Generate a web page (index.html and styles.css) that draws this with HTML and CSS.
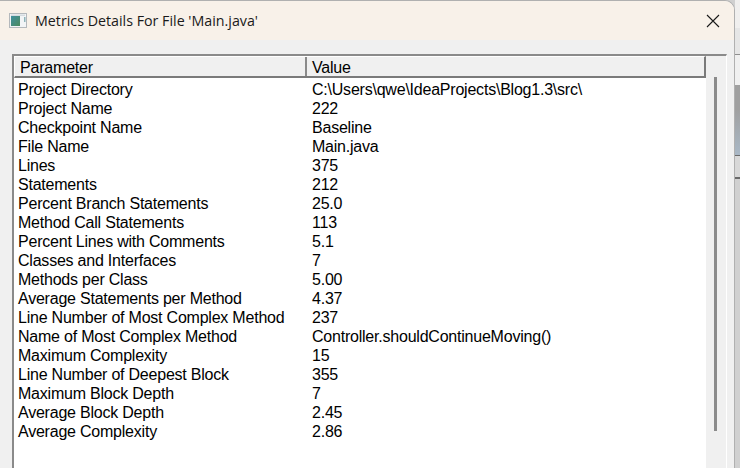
FILE: index.html
```html
<!DOCTYPE html>
<html lang="en">
<head>
    <meta charset="UTF-8">
    <title>Metrics Details For File 'Main.java'</title>
    <link rel="stylesheet" href="styles.css">
</head>
<body>
    <div class="window">
        <div class="title-bar">
            <svg class="app-icon" width="18" height="15" viewBox="0 0 18 15">
                <defs>
                    <linearGradient id="pane" x1="0" y1="0" x2="1" y2="1">
                        <stop offset="0" stop-color="#3f8f9f"/>
                        <stop offset="1" stop-color="#4c8a5e"/>
                    </linearGradient>
                </defs>
                <rect x="0.5" y="0.5" width="17" height="14" fill="#f2f4f6" stroke="#b4b8bc"/>
                <rect x="2" y="1.5" width="14" height="1.5" fill="#d5dbe0"/>
                <rect x="2" y="3" width="9" height="10" fill="url(#pane)"/>
                <rect x="15" y="4" width="1.5" height="5" fill="#8fb4ba"/>
            </svg>
            <span class="title-text">Metrics Details For File 'Main.java'</span>
            <svg class="close-icon" width="14" height="14" viewBox="0 0 14 14">
                <path d="M1 1 L13 13 M13 1 L1 13" stroke="#1a1a1a" stroke-width="1.1" fill="none"/>
            </svg>
        </div>
        <div class="content">
            <div class="list">
                <div class="list-main">
                    <div class="list-header">
                        <div class="header-cell col-param">Parameter</div>
                        <div class="header-cell col-value">Value</div>
                    </div>
                    <div class="rows">
                        <div class="row"><span class="col-param">Project Directory</span><span>C:\Users\qwe\IdeaProjects\Blog1.3\src\</span></div>
                        <div class="row"><span class="col-param">Project Name</span><span>222</span></div>
                        <div class="row"><span class="col-param">Checkpoint Name</span><span>Baseline</span></div>
                        <div class="row"><span class="col-param">File Name</span><span>Main.java</span></div>
                        <div class="row"><span class="col-param">Lines</span><span>375</span></div>
                        <div class="row"><span class="col-param">Statements</span><span>212</span></div>
                        <div class="row"><span class="col-param">Percent Branch Statements</span><span>25.0</span></div>
                        <div class="row"><span class="col-param">Method Call Statements</span><span>113</span></div>
                        <div class="row"><span class="col-param">Percent Lines with Comments</span><span>5.1</span></div>
                        <div class="row"><span class="col-param">Classes and Interfaces</span><span>7</span></div>
                        <div class="row"><span class="col-param">Methods per Class</span><span>5.00</span></div>
                        <div class="row"><span class="col-param">Average Statements per Method</span><span>4.37</span></div>
                        <div class="row"><span class="col-param">Line Number of Most Complex Method</span><span>237</span></div>
                        <div class="row"><span class="col-param">Name of Most Complex Method</span><span>Controller.shouldContinueMoving()</span></div>
                        <div class="row"><span class="col-param">Maximum Complexity</span><span>15</span></div>
                        <div class="row"><span class="col-param">Line Number of Deepest Block</span><span>355</span></div>
                        <div class="row"><span class="col-param">Maximum Block Depth</span><span>7</span></div>
                        <div class="row"><span class="col-param">Average Block Depth</span><span>2.45</span></div>
                        <div class="row"><span class="col-param">Average Complexity</span><span>2.86</span></div>
                    </div>
                </div>
                <div class="scrollbar">
                    <div class="thumb"></div>
                </div>
            </div>
        </div>
    </div>
    <!-- strip of the windows behind the dialog -->
    <div class="behind">
        <div class="behind-top"></div>
        <div class="behind-bar"></div>
        <div class="behind-rule"></div>
        <div class="behind-panel"></div>
        <div class="behind-image"></div>
        <div class="behind-rule dark"></div>
        <div class="behind-tab"></div>
        <div class="behind-rule dark thick"></div>
        <div class="behind-rest"></div>
    </div>
</body>
</html>
```

FILE: styles.css
```css
html, body {
    height: 100%;
}

body {
    margin: 0;
    overflow: hidden;
    display: flex;
    background: #d0d0d0;
    font-family: "Liberation Sans", Arial, sans-serif;
    color: #000;
}

.window {
    width: 735px;
    height: 468px;
    flex: none;
    box-sizing: border-box;
    display: flex;
    flex-direction: column;
    background: #f0f0f0;
    border-top: 1px solid #b0b0b0;
    border-right: 1px solid #b0b0b0;
    border-top-right-radius: 10px;
    overflow: hidden;
}

.title-bar {
    height: 39px;
    flex: none;
    display: flex;
    align-items: center;
    padding: 0 14px 0 9px;
    background: #f8f1e9;
}

.app-icon {
    flex: none;
    margin-right: 8px;
}

.title-text {
    flex: 1;
    font-family: "Open Sans", "Noto Sans", sans-serif;
    font-size: 14.25px;
    color: #1a1a1a;
}

.close-icon {
    flex: none;
}

.content {
    flex: 1;
    min-height: 0;
    padding: 14px 7px 0 12px;
}

.list {
    height: 100%;
    box-sizing: border-box;
    display: flex;
    background: #fff;
    border-top: 2px solid #8a8a8a;
    border-left: 2px solid #8a8a8a;
    border-right: 1px solid #fff;
}

.list-main {
    flex: 1;
    min-width: 0;
    display: flex;
    flex-direction: column;
}

.list-header {
    height: 22px;
    display: flex;
    flex: none;
    box-sizing: border-box;
    background: #f0f0f0;
    border-top: 1px solid #fff;
    border-left: 1px solid #fff;
    border-bottom: 2px solid #7a7a7a;
    border-right: 2px solid #7a7a7a;
    font-size: 16px;
    letter-spacing: -0.2px;
    line-height: 19px;
}

.header-cell {
    padding: 1px 0 0 5px;
    box-sizing: border-box;
}

.header-cell.col-param {
    width: 292px;
    border-right: 2px solid #8a8a8a;
}

.rows {
    padding: 2px 0 0 4px;
    font-size: 16px;
    letter-spacing: -0.22px;
    line-height: 19px;
}

.row {
    display: flex;
    height: 19px;
    white-space: nowrap;
}

.row .col-param {
    width: 294px;
    flex: none;
}

.scrollbar {
    width: 20px;
    flex: none;
    background: #f0f0f0;
}

.thumb {
    width: 3px;
    height: 354px;
    margin: 21px 0 0 8px;
    background: #8b8b8b;
}

.behind {
    flex: 1;
    display: flex;
    flex-direction: column;
}

.behind-top {
    height: 28px;
    background: #f0efee;
}

.behind-bar {
    height: 26px;
    background: #e6e6e6;
}

.behind-rule {
    height: 1px;
    background: #8f8f8f;
}

.behind-rule.dark {
    background: #6a6a6a;
}

.behind-rule.thick {
    height: 2px;
}

.behind-panel {
    height: 30px;
    background: #f0f0f0;
}

.behind-image {
    height: 70px;
    background: linear-gradient(#a0a0a0 35%, #a9b8c6);
}

.behind-tab {
    height: 21px;
    background: #d8d8d8;
}

.behind-rest {
    flex: 1;
    background: #d0d0d0;
}
```
